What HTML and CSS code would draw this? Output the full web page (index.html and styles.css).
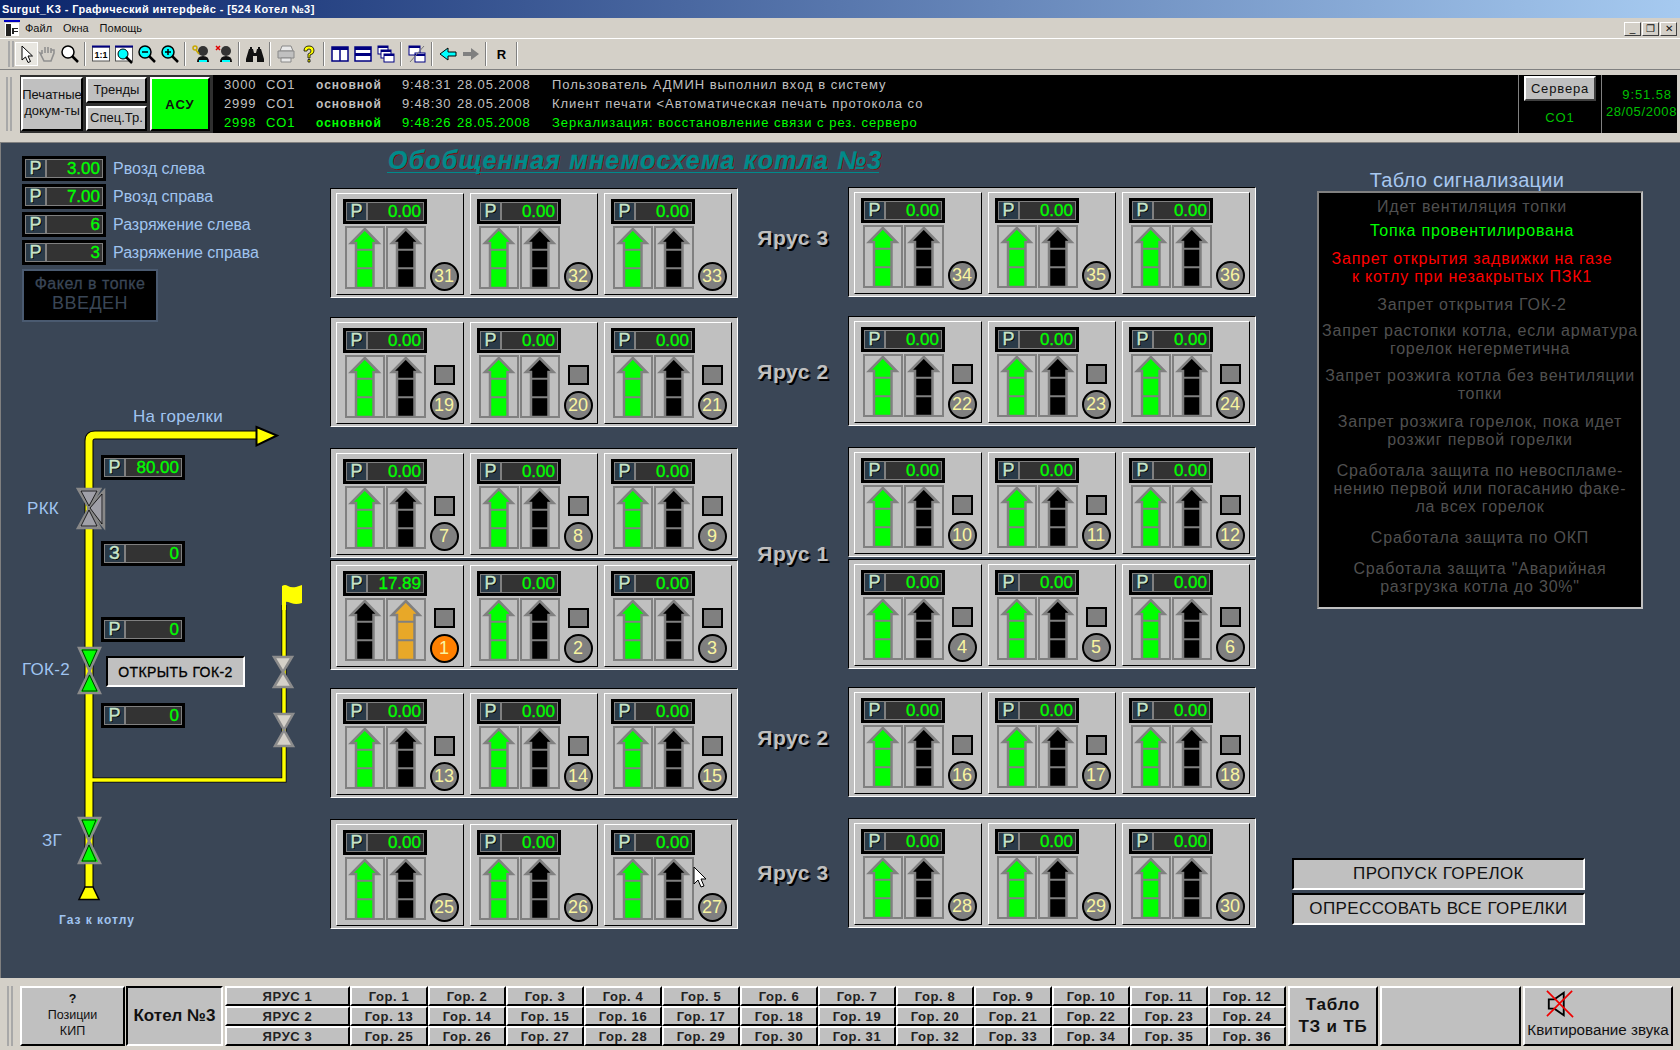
FILE: index.html
```html
<!DOCTYPE html>
<html lang="ru">

<head>
    <meta charset="UTF-8">
    <title>Surgut_K3</title>
    <link rel="stylesheet" href="styles.css">
</head>

<body>
    <svg class="sprite">
        <symbol id="arrow" viewBox="0 0 40 63">
            <rect x="1" y="1" width="38" height="61" fill="#c0c0c0" stroke="#808080" stroke-width="2" />
            <path d="M19.750 3L33.500 17H28.500V62H11V17H6Z" fill="currentColor" stroke="#808080" stroke-width="2.500" />
            <path d="M12 23.700H28M12 42.300H28" stroke="#808080" stroke-width="2" />
        </symbol>
    </svg>

    <div class="titlebar">Surgut_K3 - Графический интерфейс - [524 Котел №3]</div>

    <div class="menubar">
        <svg class="menu-icon" viewBox="0 0 16 16">
            <path d="M0 0H16V2H0Z" fill="#0000c0" />
            <path d="M1 3H15V16H1Z" fill="#fff" />
            <path d="M2 4H7V16H2ZM8 8H14V9H10V11H14V12H10V14H8Z" fill="#222" />
        </svg>
        <span>Файл</span>
        <span>Окна</span>
        <span>Помощь</span>
        <div class="win-btns">
            <div class="win-btn">_</div>
            <div class="win-btn">❐</div>
            <div class="win-btn">✕</div>
        </div>
    </div>

    <div class="toolbar">
        <i class="grip"></i>
        <div class="tool active"><svg viewBox="0 0 20 20"><path d="M5 2V16L8.500 13L11 18.500L13.500 17.500L11 12H15.500Z" fill="#fff" stroke="#000" /></svg></div>
        <div class="tool"><svg viewBox="0 0 20 20"><path d="M5 10V6M8 9V3M11 9V3M14 9V4M5 10L3 9L7 17H14L17 9V6H14" fill="#d4d0c8" stroke="#909090" stroke-width="1.600" /></svg></div>
        <div class="tool"><svg viewBox="0 0 20 20"><circle cx="8" cy="8" r="6" fill="#fff" stroke="#000" stroke-width="1.500" /><path d="M12 12L18 18" stroke="#000" stroke-width="2.500" /></svg></div>
        <i class="sep"></i>
        <div class="tool"><svg viewBox="0 0 20 20"><rect x="1.500" y="3" width="17" height="14" fill="#fff" stroke="#555" /><path d="M1 2.500H19" stroke="#000080" stroke-width="2" /><text x="10" y="14" class="tool-text">1:1</text></svg></div>
        <div class="tool"><svg viewBox="0 0 20 20"><rect x="1.500" y="3" width="17" height="14" fill="#fff" stroke="#555" /><path d="M1 2.500H19" stroke="#000080" stroke-width="2" /><circle cx="9" cy="10" r="5" fill="#00ffff" stroke="#000" /><path d="M12 13L18 19" stroke="#000" stroke-width="2.500" /></svg></div>
        <div class="tool"><svg viewBox="0 0 20 20"><circle cx="8" cy="8" r="6" fill="#00ffff" stroke="#000" stroke-width="1.500" /><path d="M5 8H11" stroke="#000" stroke-width="1.500" /><path d="M12 12L18 18" stroke="#000" stroke-width="2.500" /></svg></div>
        <div class="tool"><svg viewBox="0 0 20 20"><circle cx="8" cy="8" r="6" fill="#00ffff" stroke="#000" stroke-width="1.500" /><path d="M5 8H11M8 5V11" stroke="#000" stroke-width="1.500" /><path d="M12 12L18 18" stroke="#000" stroke-width="2.500" /></svg></div>
        <i class="sep"></i>
        <div class="tool"><svg viewBox="0 0 20 20"><circle cx="12" cy="7" r="5" fill="#333" /><path d="M6 18Q6 12 12 12T18 18Z" fill="#111" /><path d="M8 17H16" stroke="#00ffff" stroke-width="2" /><circle cx="4" cy="4" r="2" fill="none" stroke="#c8a800" stroke-width="1.500" /><path d="M5 6L8 10" stroke="#c8a800" stroke-width="1.500" /></svg></div>
        <div class="tool"><svg viewBox="0 0 20 20"><circle cx="12" cy="7" r="5" fill="#333" /><path d="M6 18Q6 12 12 12T18 18Z" fill="#111" /><path d="M8 17H16" stroke="#00ffff" stroke-width="2" /><path d="M2 2L6 6M6 2L2 6" stroke="#e00000" stroke-width="1.500" /></svg></div>
        <i class="sep"></i>
        <div class="tool"><svg viewBox="0 0 20 20"><path d="M4 5H8L9 9H11L12 5H16L19 15V18H12V12H8V18H1V15Z" fill="#111" /><path d="M5 3H7V5H5ZM13 3H15V5H13Z" fill="#111" /></svg></div>
        <i class="sep"></i>
        <div class="tool"><svg viewBox="0 0 20 20"><path d="M6 2H15L17 7H4Z" fill="#e8e8e8" stroke="#888" /><path d="M2 7H18V14H2Z" fill="#c0c0c0" stroke="#888" /><path d="M5 14H15V18H5Z" fill="#e8e8e8" stroke="#888" /></svg></div>
        <div class="tool"><svg viewBox="0 0 20 20"><path d="M5 7Q5 2 10 2T15 7Q15 10 11 11V14H9V10Q12 9 12 7T10 5T8 7Z" fill="#ffff00" stroke="#000" stroke-width=".800" /><path d="M9 15.500H11V18H9Z" fill="#ffff00" stroke="#000" stroke-width=".800" /></svg></div>
        <i class="sep"></i>
        <div class="tool"><svg viewBox="0 0 20 20"><rect x="2" y="3" width="16" height="14" fill="#fff" stroke="#000080" stroke-width="1.500" /><path d="M2 4.500H18" stroke="#000080" stroke-width="3" /><path d="M10 4V17" stroke="#000080" stroke-width="1.500" /></svg></div>
        <div class="tool"><svg viewBox="0 0 20 20"><rect x="2" y="3" width="16" height="14" fill="#fff" stroke="#000080" stroke-width="1.500" /><path d="M2 4.500H18M2 10.500H18" stroke="#000080" stroke-width="3" /></svg></div>
        <div class="tool"><svg viewBox="0 0 20 20"><rect x="2" y="2" width="10" height="8" fill="#fff" stroke="#000080" /><rect x="5" y="6" width="10" height="8" fill="#fff" stroke="#000080" /><rect x="8" y="10" width="10" height="8" fill="#fff" stroke="#000080" /><path d="M2 3H12M5 7H15M8 11H18" stroke="#000080" stroke-width="2" /></svg></div>
        <i class="sep"></i>
        <div class="tool"><svg viewBox="0 0 20 20"><rect x="2" y="2" width="11" height="9" fill="#fff" stroke="#000080" /><rect x="8" y="9" width="10" height="9" fill="#fff" stroke="#000080" /><path d="M2 3H13M8 11H18" stroke="#000080" stroke-width="2" /><path d="M3 18L17 2" stroke="#777" /></svg></div>
        <i class="sep"></i>
        <div class="tool"><svg viewBox="0 0 20 20"><path d="M2 10L10 4V8H18V12H10V16Z" fill="#00ffff" stroke="#000" /></svg></div>
        <div class="tool"><svg viewBox="0 0 20 20"><path d="M18 10L10 4V8H2V12H10V16Z" fill="#808080" /></svg></div>
        <i class="sep"></i>
        <div class="tool tool-r">R</div>
        <i class="sep"></i>
    </div>

    <div class="panel">
        <i class="grip"></i>
        <div class="panel-btns">
            <div class="btn btn-docs">Печатные докум-ты</div>
            <div class="btn-stack">
                <div class="btn">Тренды</div>
                <div class="btn">Спец.Тр.</div>
            </div>
            <div class="btn btn-asu">АСУ</div>
        </div>
        <div class="log">
            <div class="log-rows">
                <div class="log-row"><span>3000</span><span>CO1</span><b>основной</b><span>9:48:31</span><span>28.05.2008</span><span class="msg">Пользователь АДМИН выполнил вход в систему</span></div>
                <div class="log-row"><span>2999</span><span>CO1</span><b>основной</b><span>9:48:30</span><span>28.05.2008</span><span class="msg">Клиент печати &lt;Автоматическая печать протокола со</span></div>
                <div class="log-row new"><span>2998</span><span>CO1</span><b>основной</b><span>9:48:26</span><span>28.05.2008</span><span class="msg">Зеркализация: восстановление связи с рез. серверо</span></div>
            </div>
            <div class="servers">
                <div class="btn btn-servers">Сервера</div>
                <div class="server-name">CO1</div>
            </div>
            <div class="clock">
                <div class="clock-time">9:51.58</div>
                <div>28/05/2008</div>
            </div>
        </div>
    </div>

    <div class="main">
        <div class="left">
            <div class="param"><div class="meter"><span class="tag">P</span><span class="val">3.00</span></div><span class="param-name">Рвозд слева</span></div>
            <div class="param"><div class="meter"><span class="tag">P</span><span class="val">7.00</span></div><span class="param-name">Рвозд справа</span></div>
            <div class="param"><div class="meter"><span class="tag">P</span><span class="val">6</span></div><span class="param-name">Разряжение слева</span></div>
            <div class="param"><div class="meter"><span class="tag">P</span><span class="val">3</span></div><span class="param-name">Разряжение справа</span></div>
            <div class="flame">Факел в топке<span>ВВЕДЕН</span></div>

            <div class="scheme">
                <svg class="pipes" viewBox="1 330 330 610">
                    <path d="M89 888V441Q89 435 95 435H258" fill="none" stroke="#000" stroke-width="9" />
                    <path d="M89 888V441Q89 435 95 435H258" fill="none" stroke="#ffff00" stroke-width="7" />
                    <path d="M256.500 427L277 435.500L256.500 445.500Z" fill="#ffff00" stroke="#000" stroke-width="2" />
                    <path d="M93 780H284V605" fill="none" stroke="#000" stroke-width="5" />
                    <path d="M92 780H284V605" fill="none" stroke="#ffff00" stroke-width="3.500" />
                    <path d="M85 887H93L99 899.500H79Z" fill="#ffff00" stroke="#000" stroke-width="1.500" />
                    <path d="M282 586Q285 584 288 586T296 587L302 585V603Q296 605 291 603T286 602V610H282Z" fill="#ffff00" />

                    <g class="valve grey">
                        <path d="M104 491V527L88 508Z" />
                        <path d="M78 489H100L89 508L100 528H78L89 508Z" />
                    </g>
                    <path class="valve-in" d="M81 491H97L89 506ZM81 526H97L89 510ZM102 494V524L90 508Z" />
                    <g class="valve green">
                        <path d="M79 648H100L89.500 671L100 693H79L89.500 671Z" />
                    </g>
                    <path class="valve-in" d="M82 650H97L89.500 667ZM82 691H97L89.500 675Z" />
                    <g class="valve green">
                        <path d="M79 818H100L89 841L100 863H79L89 841Z" />
                    </g>
                    <path class="valve-in" d="M82 820H96L89 837ZM82 861H96L89 845Z" />
                    <g class="valve light">
                        <path d="M274 657H292L283 672L292 687H274L283 672Z" />
                        <path d="M275 714H293L284 730L293 746H275L284 730Z" />
                    </g>
                </svg>
                <span class="sch-label to-burners">На горелки</span>
                <span class="sch-label rkk">РКК</span>
                <span class="sch-label gok">ГОК-2</span>
                <span class="sch-label zg">ЗГ</span>
                <span class="sch-label gas">Газ к котлу</span>
                <div class="meter m-80"><span class="tag">P</span><span class="val">80.00</span></div>
                <div class="meter m-z"><span class="tag">З</span><span class="val">0</span></div>
                <div class="meter m-p1"><span class="tag">P</span><span class="val">0</span></div>
                <div class="meter m-p2"><span class="tag">P</span><span class="val">0</span></div>
                <div class="open-gok">ОТКРЫТЬ ГОК-2</div>
            </div>
        </div>

        <div class="center">
            <div class="headline">Обобщенная мнемосхема котла №3</div>

            <div class="tier tier-top">
                <div class="group">
                    <div class="card"><div class="card-main"><div class="meter"><span class="tag">P</span><span class="val">0.00</span></div><div class="arrows"><svg class="arrow on"><use href="#arrow" /></svg><svg class="arrow off"><use href="#arrow" /></svg></div></div><div class="side"><b class="num">31</b></div></div>
                    <div class="card"><div class="card-main"><div class="meter"><span class="tag">P</span><span class="val">0.00</span></div><div class="arrows"><svg class="arrow on"><use href="#arrow" /></svg><svg class="arrow off"><use href="#arrow" /></svg></div></div><div class="side"><b class="num">32</b></div></div>
                    <div class="card"><div class="card-main"><div class="meter"><span class="tag">P</span><span class="val">0.00</span></div><div class="arrows"><svg class="arrow on"><use href="#arrow" /></svg><svg class="arrow off"><use href="#arrow" /></svg></div></div><div class="side"><b class="num">33</b></div></div>
                </div>
                <div class="tier-name name-high">Ярус 3</div>
                <div class="group">
                    <div class="card"><div class="card-main"><div class="meter"><span class="tag">P</span><span class="val">0.00</span></div><div class="arrows"><svg class="arrow on"><use href="#arrow" /></svg><svg class="arrow off"><use href="#arrow" /></svg></div></div><div class="side"><b class="num">34</b></div></div>
                    <div class="card"><div class="card-main"><div class="meter"><span class="tag">P</span><span class="val">0.00</span></div><div class="arrows"><svg class="arrow on"><use href="#arrow" /></svg><svg class="arrow off"><use href="#arrow" /></svg></div></div><div class="side"><b class="num">35</b></div></div>
                    <div class="card"><div class="card-main"><div class="meter"><span class="tag">P</span><span class="val">0.00</span></div><div class="arrows"><svg class="arrow on"><use href="#arrow" /></svg><svg class="arrow off"><use href="#arrow" /></svg></div></div><div class="side"><b class="num">36</b></div></div>
                </div>
            </div>

            <div class="tier tier-wide">
                <div class="group">
                    <div class="card"><div class="card-main"><div class="meter"><span class="tag">P</span><span class="val">0.00</span></div><div class="arrows"><svg class="arrow on"><use href="#arrow" /></svg><svg class="arrow off"><use href="#arrow" /></svg></div></div><div class="side"><i class="lamp"></i><b class="num">19</b></div></div>
                    <div class="card"><div class="card-main"><div class="meter"><span class="tag">P</span><span class="val">0.00</span></div><div class="arrows"><svg class="arrow on"><use href="#arrow" /></svg><svg class="arrow off"><use href="#arrow" /></svg></div></div><div class="side"><i class="lamp"></i><b class="num">20</b></div></div>
                    <div class="card"><div class="card-main"><div class="meter"><span class="tag">P</span><span class="val">0.00</span></div><div class="arrows"><svg class="arrow on"><use href="#arrow" /></svg><svg class="arrow off"><use href="#arrow" /></svg></div></div><div class="side"><i class="lamp"></i><b class="num">21</b></div></div>
                </div>
                <div class="tier-name">Ярус 2</div>
                <div class="group">
                    <div class="card"><div class="card-main"><div class="meter"><span class="tag">P</span><span class="val">0.00</span></div><div class="arrows"><svg class="arrow on"><use href="#arrow" /></svg><svg class="arrow off"><use href="#arrow" /></svg></div></div><div class="side"><i class="lamp"></i><b class="num">22</b></div></div>
                    <div class="card"><div class="card-main"><div class="meter"><span class="tag">P</span><span class="val">0.00</span></div><div class="arrows"><svg class="arrow on"><use href="#arrow" /></svg><svg class="arrow off"><use href="#arrow" /></svg></div></div><div class="side"><i class="lamp"></i><b class="num">23</b></div></div>
                    <div class="card"><div class="card-main"><div class="meter"><span class="tag">P</span><span class="val">0.00</span></div><div class="arrows"><svg class="arrow on"><use href="#arrow" /></svg><svg class="arrow off"><use href="#arrow" /></svg></div></div><div class="side"><i class="lamp"></i><b class="num">24</b></div></div>
                </div>
            </div>

            <div class="tier tier-double">
                <div class="stack">
                    <div class="group">
                        <div class="card"><div class="card-main"><div class="meter"><span class="tag">P</span><span class="val">0.00</span></div><div class="arrows"><svg class="arrow on"><use href="#arrow" /></svg><svg class="arrow off"><use href="#arrow" /></svg></div></div><div class="side"><i class="lamp"></i><b class="num">7</b></div></div>
                        <div class="card"><div class="card-main"><div class="meter"><span class="tag">P</span><span class="val">0.00</span></div><div class="arrows"><svg class="arrow on"><use href="#arrow" /></svg><svg class="arrow off"><use href="#arrow" /></svg></div></div><div class="side"><i class="lamp"></i><b class="num">8</b></div></div>
                        <div class="card"><div class="card-main"><div class="meter"><span class="tag">P</span><span class="val">0.00</span></div><div class="arrows"><svg class="arrow on"><use href="#arrow" /></svg><svg class="arrow off"><use href="#arrow" /></svg></div></div><div class="side"><i class="lamp"></i><b class="num">9</b></div></div>
                    </div>
                    <div class="group">
                        <div class="card"><div class="card-main"><div class="meter"><span class="tag">P</span><span class="val">17.89</span></div><div class="arrows"><svg class="arrow off"><use href="#arrow" /></svg><svg class="arrow alarm"><use href="#arrow" /></svg></div></div><div class="side"><i class="lamp"></i><b class="num hot">1</b></div></div>
                        <div class="card"><div class="card-main"><div class="meter"><span class="tag">P</span><span class="val">0.00</span></div><div class="arrows"><svg class="arrow on"><use href="#arrow" /></svg><svg class="arrow off"><use href="#arrow" /></svg></div></div><div class="side"><i class="lamp"></i><b class="num">2</b></div></div>
                        <div class="card"><div class="card-main"><div class="meter"><span class="tag">P</span><span class="val">0.00</span></div><div class="arrows"><svg class="arrow on"><use href="#arrow" /></svg><svg class="arrow off"><use href="#arrow" /></svg></div></div><div class="side"><i class="lamp"></i><b class="num">3</b></div></div>
                    </div>
                </div>
                <div class="tier-name name-high">Ярус 1</div>
                <div class="stack">
                    <div class="group">
                        <div class="card"><div class="card-main"><div class="meter"><span class="tag">P</span><span class="val">0.00</span></div><div class="arrows"><svg class="arrow on"><use href="#arrow" /></svg><svg class="arrow off"><use href="#arrow" /></svg></div></div><div class="side"><i class="lamp"></i><b class="num">10</b></div></div>
                        <div class="card"><div class="card-main"><div class="meter"><span class="tag">P</span><span class="val">0.00</span></div><div class="arrows"><svg class="arrow on"><use href="#arrow" /></svg><svg class="arrow off"><use href="#arrow" /></svg></div></div><div class="side"><i class="lamp"></i><b class="num">11</b></div></div>
                        <div class="card"><div class="card-main"><div class="meter"><span class="tag">P</span><span class="val">0.00</span></div><div class="arrows"><svg class="arrow on"><use href="#arrow" /></svg><svg class="arrow off"><use href="#arrow" /></svg></div></div><div class="side"><i class="lamp"></i><b class="num">12</b></div></div>
                    </div>
                    <div class="group">
                        <div class="card"><div class="card-main"><div class="meter"><span class="tag">P</span><span class="val">0.00</span></div><div class="arrows"><svg class="arrow on"><use href="#arrow" /></svg><svg class="arrow off"><use href="#arrow" /></svg></div></div><div class="side"><i class="lamp"></i><b class="num">4</b></div></div>
                        <div class="card"><div class="card-main"><div class="meter"><span class="tag">P</span><span class="val">0.00</span></div><div class="arrows"><svg class="arrow on"><use href="#arrow" /></svg><svg class="arrow off"><use href="#arrow" /></svg></div></div><div class="side"><i class="lamp"></i><b class="num">5</b></div></div>
                        <div class="card"><div class="card-main"><div class="meter"><span class="tag">P</span><span class="val">0.00</span></div><div class="arrows"><svg class="arrow on"><use href="#arrow" /></svg><svg class="arrow off"><use href="#arrow" /></svg></div></div><div class="side"><i class="lamp"></i><b class="num">6</b></div></div>
                    </div>
                </div>
            </div>

            <div class="tier tier-wide">
                <div class="group">
                    <div class="card"><div class="card-main"><div class="meter"><span class="tag">P</span><span class="val">0.00</span></div><div class="arrows"><svg class="arrow on"><use href="#arrow" /></svg><svg class="arrow off"><use href="#arrow" /></svg></div></div><div class="side"><i class="lamp"></i><b class="num">13</b></div></div>
                    <div class="card"><div class="card-main"><div class="meter"><span class="tag">P</span><span class="val">0.00</span></div><div class="arrows"><svg class="arrow on"><use href="#arrow" /></svg><svg class="arrow off"><use href="#arrow" /></svg></div></div><div class="side"><i class="lamp"></i><b class="num">14</b></div></div>
                    <div class="card"><div class="card-main"><div class="meter"><span class="tag">P</span><span class="val">0.00</span></div><div class="arrows"><svg class="arrow on"><use href="#arrow" /></svg><svg class="arrow off"><use href="#arrow" /></svg></div></div><div class="side"><i class="lamp"></i><b class="num">15</b></div></div>
                </div>
                <div class="tier-name name-high">Ярус 2</div>
                <div class="group">
                    <div class="card"><div class="card-main"><div class="meter"><span class="tag">P</span><span class="val">0.00</span></div><div class="arrows"><svg class="arrow on"><use href="#arrow" /></svg><svg class="arrow off"><use href="#arrow" /></svg></div></div><div class="side"><i class="lamp"></i><b class="num">16</b></div></div>
                    <div class="card"><div class="card-main"><div class="meter"><span class="tag">P</span><span class="val">0.00</span></div><div class="arrows"><svg class="arrow on"><use href="#arrow" /></svg><svg class="arrow off"><use href="#arrow" /></svg></div></div><div class="side"><i class="lamp"></i><b class="num">17</b></div></div>
                    <div class="card"><div class="card-main"><div class="meter"><span class="tag">P</span><span class="val">0.00</span></div><div class="arrows"><svg class="arrow on"><use href="#arrow" /></svg><svg class="arrow off"><use href="#arrow" /></svg></div></div><div class="side"><i class="lamp"></i><b class="num">18</b></div></div>
                </div>
            </div>

            <div class="tier">
                <div class="group">
                    <div class="card"><div class="card-main"><div class="meter"><span class="tag">P</span><span class="val">0.00</span></div><div class="arrows"><svg class="arrow on"><use href="#arrow" /></svg><svg class="arrow off"><use href="#arrow" /></svg></div></div><div class="side"><b class="num">25</b></div></div>
                    <div class="card"><div class="card-main"><div class="meter"><span class="tag">P</span><span class="val">0.00</span></div><div class="arrows"><svg class="arrow on"><use href="#arrow" /></svg><svg class="arrow off"><use href="#arrow" /></svg></div></div><div class="side"><b class="num">26</b></div></div>
                    <div class="card"><div class="card-main"><div class="meter"><span class="tag">P</span><span class="val">0.00</span></div><div class="arrows"><svg class="arrow on"><use href="#arrow" /></svg><svg class="arrow off"><use href="#arrow" /></svg></div></div><div class="side"><b class="num">27</b></div></div>
                </div>
                <div class="tier-name name-low">Ярус 3</div>
                <div class="group">
                    <div class="card"><div class="card-main"><div class="meter"><span class="tag">P</span><span class="val">0.00</span></div><div class="arrows"><svg class="arrow on"><use href="#arrow" /></svg><svg class="arrow off"><use href="#arrow" /></svg></div></div><div class="side"><b class="num">28</b></div></div>
                    <div class="card"><div class="card-main"><div class="meter"><span class="tag">P</span><span class="val">0.00</span></div><div class="arrows"><svg class="arrow on"><use href="#arrow" /></svg><svg class="arrow off"><use href="#arrow" /></svg></div></div><div class="side"><b class="num">29</b></div></div>
                    <div class="card"><div class="card-main"><div class="meter"><span class="tag">P</span><span class="val">0.00</span></div><div class="arrows"><svg class="arrow on"><use href="#arrow" /></svg><svg class="arrow off"><use href="#arrow" /></svg></div></div><div class="side"><b class="num">30</b></div></div>
                </div>
            </div>
        </div>

        <div class="right">
            <div class="board-title">Табло сигнализации</div>
            <div class="board">
                <p class="dim shift m6">Идет вентиляция топки</p>
                <p class="green shift">Топка провентилирована</p>
                <p class="red shift">Запрет открытия задвижки на газе<br>к котлу при незакрытых ПЗК1</p>
                <p class="dim shift m8">Запрет открытия ГОК-2</p>
                <p class="dim m9">Запрет растопки котла, если арматура<br>горелок негерметична</p>
                <p class="dim">Запрет розжига котла без вентиляции<br>топки</p>
                <p class="dim m13">Запрет розжига горелок, пока идет<br>розжиг первой горелки</p>
                <p class="dim m13">Сработала защита по невоспламе-<br>нению первой или погасанию факе-<br>ла всех горелок</p>
                <p class="dim m13">Сработала защита по ОКП</p>
                <p class="dim">Сработала защита "Аварийная<br>разгрузка котла до 30%"</p>
            </div>
            <div class="wide-btn first">ПРОПУСК ГОРЕЛОК</div>
            <div class="wide-btn">ОПРЕССОВАТЬ ВСЕ ГОРЕЛКИ</div>
        </div>

        <svg class="cursor" viewBox="0 0 14 22"><path d="M1 1V18L5 14L8 21L11 20L8 13H13Z" fill="#fff" stroke="#000" /></svg>
    </div>

    <div class="bottom">
        <i class="grip"></i>
        <div class="btn btn-pos"><b>?</b>Позиции<br>КИП</div>
        <div class="btn btn-boiler">Котел №3</div>
        <div class="nav">
            <div class="btn nav-btn">ЯРУС 1</div>
            <div class="btn nav-btn">Гор. 1</div>
            <div class="btn nav-btn">Гор. 2</div>
            <div class="btn nav-btn">Гор. 3</div>
            <div class="btn nav-btn">Гор. 4</div>
            <div class="btn nav-btn">Гор. 5</div>
            <div class="btn nav-btn">Гор. 6</div>
            <div class="btn nav-btn">Гор. 7</div>
            <div class="btn nav-btn">Гор. 8</div>
            <div class="btn nav-btn">Гор. 9</div>
            <div class="btn nav-btn">Гор. 10</div>
            <div class="btn nav-btn">Гор. 11</div>
            <div class="btn nav-btn">Гор. 12</div>
            <div class="btn nav-btn">ЯРУС 2</div>
            <div class="btn nav-btn">Гор. 13</div>
            <div class="btn nav-btn">Гор. 14</div>
            <div class="btn nav-btn">Гор. 15</div>
            <div class="btn nav-btn">Гор. 16</div>
            <div class="btn nav-btn">Гор. 17</div>
            <div class="btn nav-btn">Гор. 18</div>
            <div class="btn nav-btn">Гор. 19</div>
            <div class="btn nav-btn">Гор. 20</div>
            <div class="btn nav-btn">Гор. 21</div>
            <div class="btn nav-btn">Гор. 22</div>
            <div class="btn nav-btn">Гор. 23</div>
            <div class="btn nav-btn">Гор. 24</div>
            <div class="btn nav-btn">ЯРУС 3</div>
            <div class="btn nav-btn">Гор. 25</div>
            <div class="btn nav-btn">Гор. 26</div>
            <div class="btn nav-btn">Гор. 27</div>
            <div class="btn nav-btn">Гор. 28</div>
            <div class="btn nav-btn">Гор. 29</div>
            <div class="btn nav-btn">Гор. 30</div>
            <div class="btn nav-btn">Гор. 31</div>
            <div class="btn nav-btn">Гор. 32</div>
            <div class="btn nav-btn">Гор. 33</div>
            <div class="btn nav-btn">Гор. 34</div>
            <div class="btn nav-btn">Гор. 35</div>
            <div class="btn nav-btn">Гор. 36</div>
        </div>
        <div class="btn btn-tablo">Табло<br>ТЗ и ТБ</div>
        <div class="btn btn-blank"></div>
        <div class="btn btn-sound">
            <svg viewBox="0 0 30 30">
                <path d="M3 10H9L19 3V27L9 20H3Z" fill="none" stroke="#000" stroke-width="2" />
                <path d="M1 1L29 29M28 1L1 28" stroke="#f00000" stroke-width="1.800" />
            </svg>
            <span>Квитирование звука</span>
        </div>
    </div>
</body>

</html>
```

FILE: styles.css
```css
* {
    box-sizing: border-box;
}

body {
    margin: 0;
    width: 1680px;
    height: 1050px;
    overflow: hidden;
    display: flex;
    flex-direction: column;
    background-color: #d4d0c8;
    font-family: "Liberation Sans", Arial, sans-serif;
}

.sprite {
    position: absolute;
    width: 0;
    height: 0;
}

.titlebar {
    height: 18px;
    padding-left: 2px;
    background: linear-gradient(to right, #0a246a, #a6caf0);
    color: #fff;
    font-size: 11px;
    font-weight: bold;
    letter-spacing: .4px;
    line-height: 18px;
}

.menubar {
    height: 21px;
    display: flex;
    align-items: center;
    border-bottom: 1px solid #fff;
    font-size: 11px;
    color: #111;
}

.menubar span {
    margin-right: 11px;
}

.menu-icon {
    width: 16px;
    height: 16px;
    margin: 0 5px 0 4px;
}

.win-btns {
    margin: 2px 3px 0 auto;
    display: flex;
    gap: 1px;
}

.win-btn {
    width: 17px;
    height: 14px;
    background-color: #d4d0c8;
    border: 1px solid;
    border-color: #fff #404040 #404040 #fff;
    font-size: 10px;
    line-height: 11px;
    text-align: center;
}

.toolbar {
    height: 31px;
    display: flex;
    align-items: center;
    border-bottom: 1px solid #808080;
    padding-left: 2px;
}

.grip {
    width: 6px;
    margin: 0 5px 0 6px;
    border-left: 2px solid #a8a8a8;
    border-right: 2px solid #a8a8a8;
    align-self: stretch;
    flex-shrink: 0;
}

.toolbar .grip {
    margin: 2px 1px 2px 6px;
}

.tool {
    width: 23px;
    height: 24px;
    display: flex;
    align-items: center;
    justify-content: center;
}

.tool svg {
    width: 20px;
    height: 20px;
}

.tool.active {
    margin-right: -3px;
    border: 1px solid #fff;
    background-color: #e8e6e0;
}

.tool-text {
    font-size: 9px;
    font-weight: bold;
    text-anchor: middle;
}

.tool-r {
    font-size: 13px;
    font-weight: bold;
}

.sep {
    width: 2px;
    height: 24px;
    margin: 0 3px;
    border-left: 1px solid #808080;
    border-right: 1px solid #fff;
}

.panel {
    height: 58px;
    margin-top: 5px;
    display: flex;
    padding-right: 3px;
}

.panel .grip {
    margin: 2px 8px 2px 6px;
}

.panel-btns {
    display: flex;
    gap: 3px;
    padding: 2px 3px 2px 1px;
    background-color: #303030;
}

.btn {
    display: flex;
    align-items: center;
    justify-content: center;
    text-align: center;
    background-color: #c0c0c0;
    border: 2px solid;
    border-color: #fff #000 #000 #fff;
    color: #111;
}

.panel-btns .btn {
    font-size: 13px;
}

.btn-docs {
    width: 62px;
    padding-bottom: 3px;
    line-height: 16px;
}

.btn-stack {
    width: 61px;
    display: flex;
    flex-direction: column;
    gap: 3px;
}

.btn-stack .btn {
    flex: 1;
    padding-bottom: 1px;
}

.panel-btns .btn-asu {
    width: 60px;
    background-color: #00ff00;
    font-weight: bold;
    letter-spacing: 1px;
}

.log {
    flex: 1;
    display: flex;
    background-color: #000;
    color: #c0c0c0;
    font-size: 13px;
    letter-spacing: .85px;
}

.log-rows {
    width: 1305px;
    padding: 0 0 0 11px;
}

.log-row {
    height: 19px;
    display: grid;
    grid-template-columns: 42px 50px 86px 55px 95px 372px;
    align-items: center;
    white-space: nowrap;
}

.log-row b {
    font-size: 12px;
    letter-spacing: 1px;
}

.log-row.new {
    color: #00ff00;
}

.msg {
    overflow: hidden;
    letter-spacing: .98px;
}

.servers {
    width: 84px;
    border-left: 1px solid #808080;
    border-right: 1px solid #808080;
    padding: 1px 5px 0;
    text-align: center;
}

.log .btn-servers {
    height: 25px;
    border-color: #fff #404040 #404040 #fff;
    border-width: 2px;
}

.server-name {
    margin-top: 9px;
    color: #00c000;
}

.clock {
    flex: 1;
    padding-top: 11px;
    color: #00c000;
    text-align: right;
    line-height: 17px;
    letter-spacing: .6px;
    white-space: nowrap;
}

.clock-time {
    padding-right: 5px;
    letter-spacing: .9px;
}

.main {
    height: 836px;
    margin-top: 9px;
    position: relative;
    display: flex;
    background-color: #3a4656;
    border-left: 1px solid #808080;
    border-top: 1px solid #808080;
}

.left {
    width: 329px;
    padding: 13px 0 0 21px;
}

.param {
    display: flex;
    align-items: center;
    gap: 7px;
    margin-bottom: 3px;
}

.param-name {
    color: #a0c4f0;
    font-size: 16px;
}

.meter {
    width: 84px;
    height: 25px;
    display: flex;
    flex-shrink: 0;
    padding: 3px;
    background-color: #000;
}

.tag {
    width: 22px;
    border: 1px solid #808080;
    border-right-width: 2px;
    background-color: #2a3a48;
    color: #c8e4c8;
    font-size: 18px;
    line-height: 17px;
    text-align: center;
    text-shadow: 1px 1px 0 #000;
    -webkit-text-stroke: .4px #c8e4c8;
}

.val {
    flex: 1;
    border: 1px solid #808080;
    border-left: 0;
    padding-right: 2px;
    background-color: #333;
    color: #00ff00;
    font-size: 17px;
    line-height: 17px;
    text-align: right;
    -webkit-text-stroke: .3px #00ff00;
}

.flame {
    width: 136px;
    height: 53px;
    margin-top: 4px;
    border: 2px solid #4a5a70;
    background-color: #000;
    color: #3a4656;
    font-size: 16px;
    letter-spacing: .5px;
    text-align: center;
    line-height: 20px;
    padding-top: 3px;
    -webkit-text-stroke: .3px #3a4656;
}

.flame span {
    display: block;
    font-size: 18px;
    line-height: 19px;
    -webkit-text-stroke: 0;
}

.scheme {
    position: relative;
    margin: 8px 0 0 -21px;
    height: 610px;
}

.pipes {
    position: absolute;
    top: 0;
    left: 0;
    width: 330px;
    height: 610px;
}

.valve path {
    stroke-width: 2.500;
    stroke-linejoin: miter;
}

.valve.grey path {
    fill: #a0a0a8;
    stroke: #888;
}

.valve.green path {
    fill: #00ff00;
    stroke: #8c8c8c;
}

.valve.light path {
    fill: #d4d0c8;
    stroke: #8c8c8c;
}

.valve-in {
    fill: none;
    stroke: #000;
    stroke-width: .8;
}

.sch-label {
    position: absolute;
    color: #a0c4f0;
    font-size: 17px;
    letter-spacing: .3px;
    white-space: nowrap;
}

.to-burners {
    left: 132px;
    top: 77px;
}

.rkk {
    left: 26px;
    top: 169px;
}

.gok {
    left: 21px;
    top: 330px;
}

.zg {
    left: 41px;
    top: 501px;
}

.gas {
    left: 58px;
    top: 583px;
    font-size: 12px;
    font-weight: bold;
    letter-spacing: 1px;
}

.scheme .meter {
    position: absolute;
    left: 100px;
}

.m-80 {
    top: 125px;
}

.m-z {
    top: 211px;
}

.m-p1 {
    top: 287px;
}

.m-p2 {
    top: 373px;
}

.open-gok {
    position: absolute;
    left: 105px;
    top: 326px;
    width: 139px;
    height: 31px;
    display: flex;
    align-items: center;
    justify-content: center;
    background-color: #c0c0c0;
    border: 2px solid;
    border-color: #000 #fff #fff #000;
    font-size: 14px;
    letter-spacing: .4px;
    -webkit-text-stroke: .3px #000;
}

.center {
    width: 926px;
}

.headline {
    position: relative;
    height: 45px;
    padding: 3px 0 0 58px;
    color: #008a8a;
    font-size: 25px;
    font-weight: bold;
    font-style: italic;
    letter-spacing: 1.2px;
    text-shadow: 1px 1px 0 #801010;
    white-space: nowrap;
    -webkit-text-stroke: .4px #008a8a;
}

.headline::after {
    content: "";
    position: absolute;
    left: 57px;
    top: 29px;
    width: 492px;
    height: 1px;
    background-color: #008a8a;
}

.tier {
    display: grid;
    grid-template-columns: 408px 110px 408px;
    align-items: center;
    margin-bottom: 20px;
}

.tier > :last-child {
    align-self: start;
    margin-top: -1px;
}

.tier-top {
    margin-bottom: 19px;
}

.tier-wide {
    margin-bottom: 21px;
}

.tier-double {
    margin-bottom: 18px;
}

.stack {
    display: flex;
    flex-direction: column;
    gap: 2px;
}

.tier-name {
    text-align: center;
    color: #c0c0c0;
    font-size: 21px;
    font-weight: bold;
    letter-spacing: .6px;
    text-shadow: 2px 2px 0 #000;
}

.name-high {
    padding-bottom: 10px;
}

.name-low {
    padding-bottom: 2px;
}

.group {
    height: 110px;
    display: flex;
    gap: 6px;
    padding: 4px 5px 2px;
    background-color: #c0c0c0;
    border: 1px solid;
    border-color: #000 #fff #fff #000;
}

.card {
    width: 128px;
    height: 102px;
    display: flex;
    padding: 5px 2px 3px 6px;
    border: 1px solid;
    border-color: #fff #000 #000 #fff;
}

.card-main {
    width: 84px;
}

.arrows {
    display: flex;
    gap: 1px;
    margin: 2px 0 0 2px;
}

.arrow {
    width: 40px;
    height: 63px;
}

.arrow.on {
    color: #00ff00;
}

.arrow.off {
    color: #000;
}

.arrow.alarm {
    color: #e8a828;
}

.side {
    width: 34px;
    display: flex;
    flex-direction: column;
    align-items: center;
    justify-content: flex-end;
}

.lamp {
    width: 21px;
    height: 20px;
    margin-bottom: 6px;
    border: 2px solid #000;
    background-color: #808080;
}

.num {
    width: 29px;
    height: 29px;
    border: 2px solid #000;
    border-radius: 50%;
    background-color: #808080;
    color: #f8f4a0;
    font-size: 18px;
    font-weight: normal;
    line-height: 25px;
    text-align: center;
}

.num.hot {
    background-color: #ff8000;
}

.right {
    flex: 1;
    padding: 26px 0 0 61px;
}

.board-title {
    width: 326px;
    padding-right: 26px;
    color: #a8c8f0;
    font-size: 20px;
    letter-spacing: .3px;
    line-height: 22px;
    text-align: center;
}

.board {
    width: 326px;
    height: 418px;
    padding-top: 5px;
    background-color: #000;
    border: 2px solid;
    border-color: #808080 #c0c0c0 #c0c0c0 #808080;
    font-size: 16px;
    letter-spacing: .8px;
    line-height: 18px;
    text-align: center;
    white-space: nowrap;
}

.board p {
    margin: 0 0 10px;
}

.board .m6 {
    margin-bottom: 6px;
}

.board .m8 {
    margin-bottom: 8px;
}

.board .m9 {
    margin-bottom: 9px;
}

.board .m13 {
    margin-bottom: 13px;
}

.dim {
    color: #505050;
}

.board .green {
    color: #00ff00;
}

.board .red {
    color: #ff0000;
}

.board .shift {
    padding-right: 16px;
}

.wide-btn {
    width: 293px;
    height: 32px;
    margin: 0 0 3px -25px;
    display: flex;
    align-items: center;
    justify-content: center;
    background-color: #c0c0c0;
    border: 2px solid;
    border-color: #000 #fff #fff #000;
    color: #111;
    font-size: 17px;
    letter-spacing: .4px;
}

.wide-btn.first {
    margin-top: 249px;
}

.cursor {
    position: absolute;
    left: 692px;
    top: 723px;
    width: 14px;
    height: 22px;
}

.bottom {
    height: 60px;
    margin-top: 8px;
    display: flex;
    align-items: stretch;
}

.bottom .grip {
    margin: 0 7px 0 7px;
}

.btn-pos {
    width: 105px;
    flex-direction: column;
    padding-bottom: 3px;
    font-size: 12.500px;
    line-height: 16px;
    margin-right: 1px;
}

.btn-pos b {
    display: block;
}

.btn-boiler {
    width: 97px;
    margin-right: 2px;
    border-color: #000 #fff #fff #000;
    font-size: 17px;
    font-weight: bold;
    white-space: nowrap;
}

.nav {
    display: grid;
    grid-template-columns: 125px repeat(12, 78px);
    grid-template-rows: repeat(3, 20px);
}

.nav-btn {
    font-size: 13px;
    font-weight: bold;
    letter-spacing: .6px;
    color: #222;
    white-space: nowrap;
}

.btn-tablo {
    width: 90px;
    margin-left: 2px;
    font-size: 17px;
    font-weight: bold;
    letter-spacing: .8px;
    line-height: 22px;
}

.btn-blank {
    width: 141px;
    margin-left: 2px;
}

.btn-sound {
    width: 150px;
    margin-left: 2px;
    flex-direction: column;
    justify-content: flex-start;
    padding-top: 2px;
    font-size: 15.200px;
    line-height: 18px;
    white-space: nowrap;
    overflow: hidden;
}

.btn-sound svg {
    width: 28px;
    height: 28px;
    margin-right: 76px;
    margin-bottom: 3px;
}
```
